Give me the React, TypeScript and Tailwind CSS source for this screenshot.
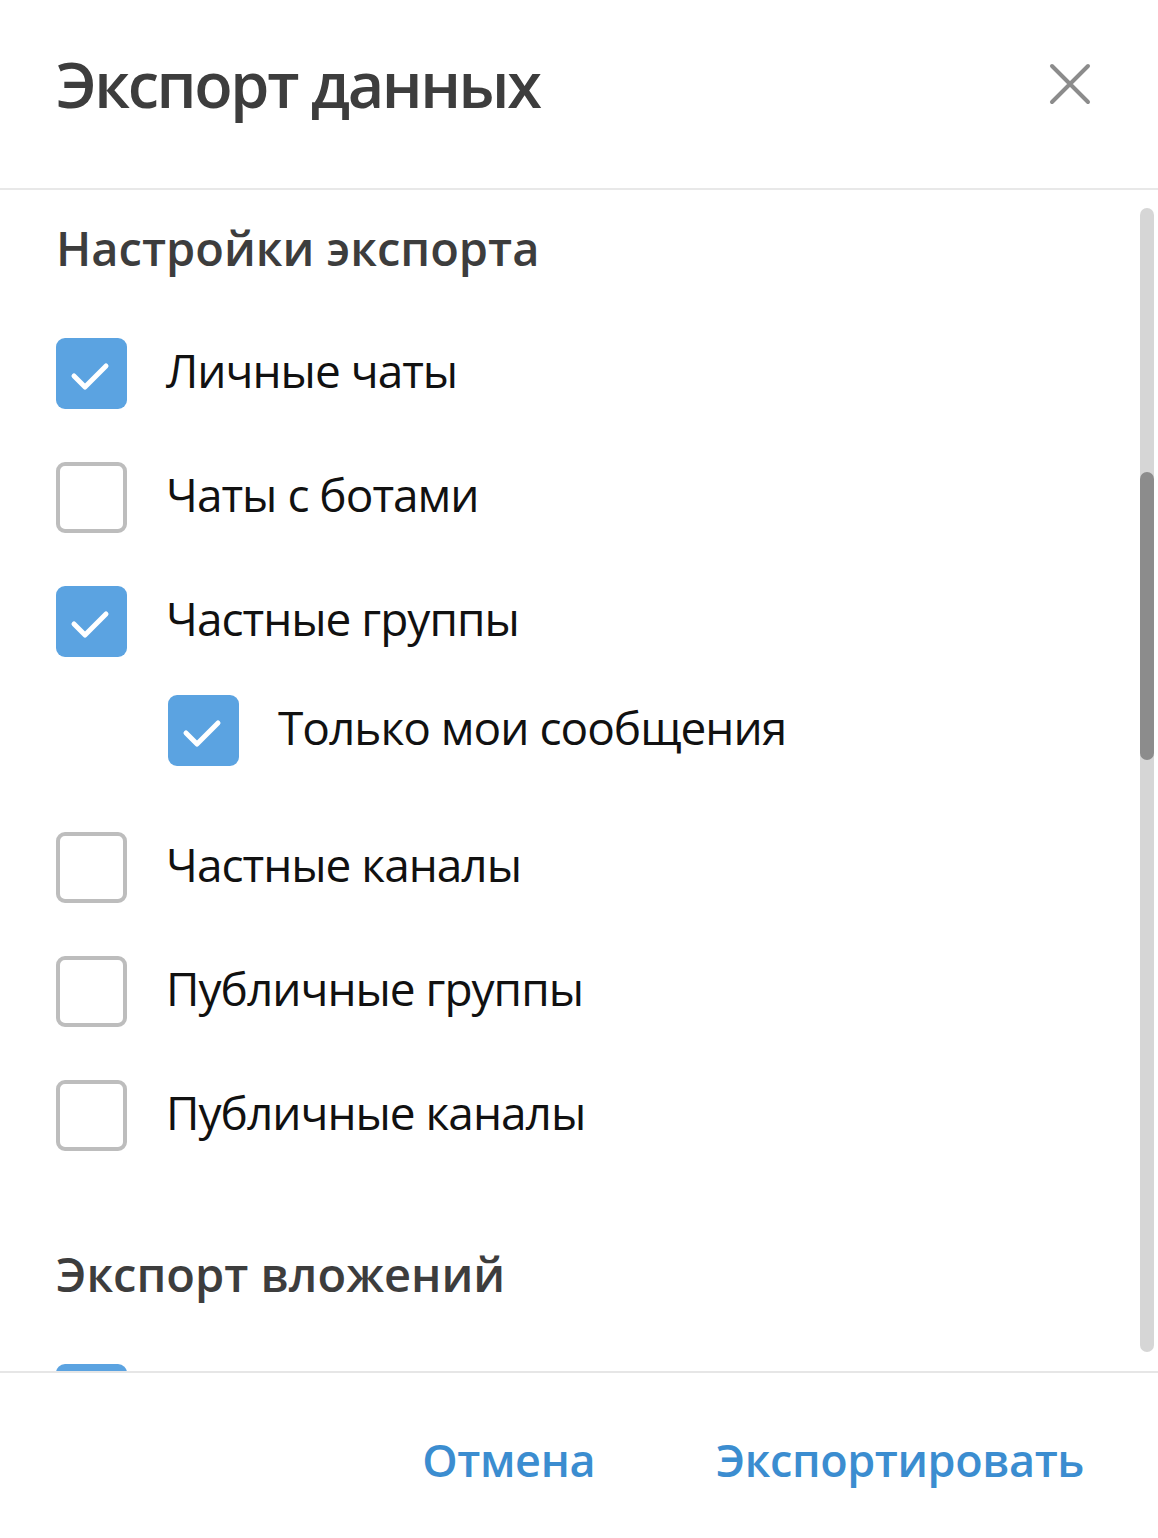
import React from "react";

const font = { fontFamily: '"Open Sans", "Noto Sans", sans-serif' };

function Box({ checked }: { checked: boolean }) {
  if (checked) {
    return (
      <div className="w-[71px] h-[71px] shrink-0 rounded-[9px] bg-[#5ba3e1] flex items-center justify-center">
        <svg width="71" height="71" viewBox="0 0 71 71" fill="none">
          <path d="M18 38 L29 49 L50 28" stroke="#ffffff" strokeWidth="5" strokeLinecap="round" strokeLinejoin="round" />
        </svg>
      </div>
    );
  }
  return <div className="w-[71px] h-[71px] shrink-0 rounded-[9px] border-[4px] border-[#bdbdbd] bg-white" />;
}

function Row({ checked, label, className = "" }: { checked: boolean; label: string; className?: string }) {
  return (
    <div className={"flex items-center gap-[39px] " + className}>
      <Box checked={checked} />
      <span className="text-[46px] leading-none tracking-[-1px] text-[#111111] pb-[7px] whitespace-nowrap">{label}</span>
    </div>
  );
}

export default function App() {
  return (
    <div className="w-[1158px] h-[1538px] bg-white flex flex-col overflow-hidden" style={font}>
      <div className="h-[188px] shrink-0 flex justify-between items-start pl-[56px] pr-[66px]">
        <h1 className="pt-[52px] text-[63px] leading-none font-semibold tracking-[-2.4px] text-[#3d3d3d] whitespace-nowrap">Экспорт данных</h1>
        <svg className="mt-[62px]" width="44" height="44" viewBox="0 0 44 44" fill="none">
          <path d="M4 4 L40 40 M40 4 L4 40" stroke="#8c8c8c" strokeWidth="4" strokeLinecap="round" />
        </svg>
      </div>
      <div className="h-[2px] shrink-0 bg-[#e8e8e8]" />
      <div className="h-[1181px] shrink-0 flex">
        <div className="flex-1 overflow-hidden pl-[56px]">
          <h2 className="pt-[35px] text-[47px] leading-none font-semibold text-[#3d3d3d] whitespace-nowrap">Настройки экспорта</h2>
          <div className="flex flex-col mt-[66px]">
            <Row checked label="Личные чаты" />
            <Row checked={false} label="Чаты с ботами" className="mt-[53px]" />
            <Row checked label="Частные группы" className="mt-[53px]" />
            <Row checked label="Только мои сообщения" className="mt-[38px] ml-[112px]" />
            <Row checked={false} label="Частные каналы" className="mt-[66px]" />
            <Row checked={false} label="Публичные группы" className="mt-[53px]" />
            <Row checked={false} label="Публичные каналы" className="mt-[53px]" />
          </div>
          <h2 className="mt-[100px] text-[47px] leading-none font-semibold text-[#3d3d3d] whitespace-nowrap">Экспорт вложений</h2>
          <div className="mt-[66px]">
            <Box checked />
          </div>
        </div>
        <div className="pt-[18px] pb-[19px] mr-[4px] shrink-0">
          <div className="w-[14px] h-full rounded-full bg-[#d6d6d6] pt-[264px]">
            <div className="w-[14px] h-[288px] rounded-full bg-[#8c8c8c]" />
          </div>
        </div>
      </div>
      <div className="h-[2px] shrink-0 bg-[#e6e6e6]" />
      <div className="flex-1 flex justify-end items-start gap-[121px] pr-[74px] pt-[64px]">
        <button className="text-[45px] leading-none font-semibold tracking-[-0.4px] text-[#3b8dd0]">Отмена</button>
        <button className="text-[45px] leading-none font-semibold tracking-[-0.4px] text-[#3b8dd0]">Экспортировать</button>
      </div>
    </div>
  );
}
